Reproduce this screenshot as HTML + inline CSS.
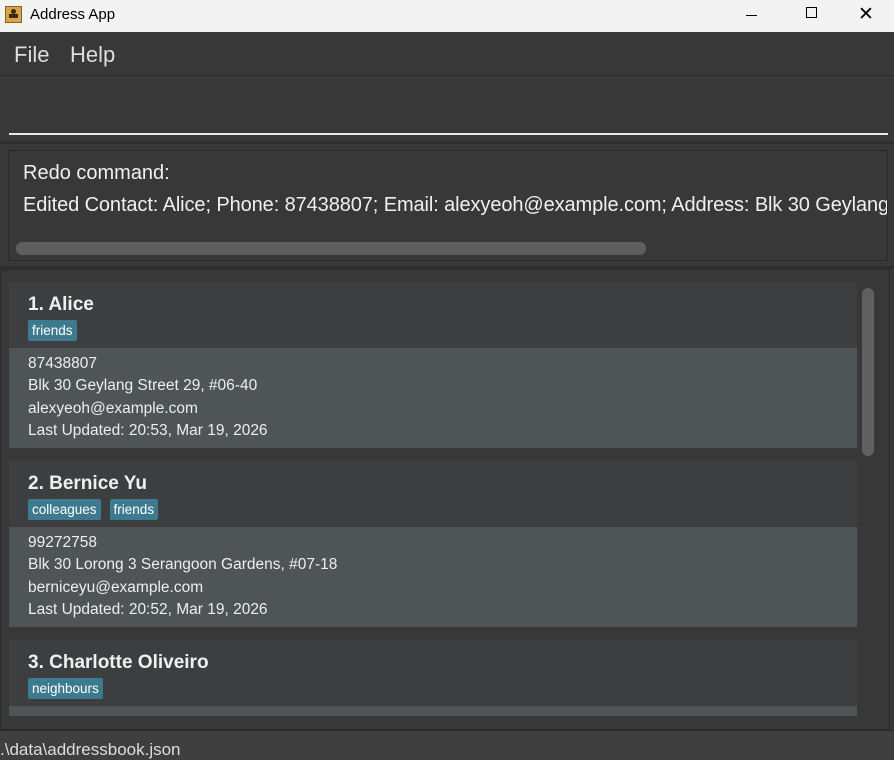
<!DOCTYPE html>
<html><head><style>
*{margin:0;padding:0;box-sizing:border-box}
body{width:894px;height:760px;overflow:hidden;background:#383838;font-family:"Liberation Sans",sans-serif;position:relative;color:#fff}
.abs{position:absolute}
.title{left:0;top:0;width:894px;height:32px;background:#f3f3f3;color:#000;font-size:15px}
.menu{top:32px;left:0;width:894px;height:44px;background:#383838;border-bottom:1px solid #2c2c2c;font-size:22px;color:#ddd}
.card{left:9px;width:848px}
.hd{background:#3c3e3f;padding:12px 19px 0}
.nm{font-size:19px;font-weight:bold;color:#f0f0f0;height:26px}
.tag{display:inline-block;background:#3d7a8f;color:#fff;font-size:13.5px;padding:1px 4px;border-radius:2px;margin-right:9px;height:21px;line-height:19px}
.dt{background:#4f5456;padding:5px 19px;font-size:15.5px;line-height:22.3px;color:#eee}
</style></head><body>
<div class="abs title">
<div class="abs" style="left:5px;top:6px;width:17px;height:17px;background:#d9a44c;border:1px solid #8a6220"></div>
<div class="abs" style="left:11px;top:9px;width:5px;height:5px;background:#3a2a10;border-radius:50%"></div>
<div class="abs" style="left:9px;top:14px;width:9px;height:4px;background:#3a2a10"></div>
<div class="abs" style="left:30px;top:6px">Address App</div>
<div class="abs" style="left:746px;top:15px;width:11px;height:1px;background:#000"></div>
<div class="abs" style="left:806px;top:7px;width:11px;height:11px;border:1px solid #000"></div>
<div class="abs" style="left:858px;top:3px;font-size:19px">✕</div>
</div>
<div class="abs menu"><span class="abs" style="left:14px;top:10px">File</span><span class="abs" style="left:70px;top:10px">Help</span></div>
<div class="abs" style="left:9px;top:133px;width:879px;height:2px;background:#e8e8e8"></div>
<div class="abs" style="left:0;top:141px;width:894px;height:3px;background:#2f2f2f"></div>
<div class="abs" style="left:8px;top:150px;width:880px;height:111px;border:1px solid #2a2a2a;overflow:hidden;font-size:20px;color:#f0f0f0;white-space:nowrap">
<div class="abs" style="left:14px;top:11px">Redo command:</div>
<div class="abs" style="left:14px;top:43px;letter-spacing:-0.1px">Edited Contact: Alice; Phone: 87438807; Email: alexyeoh@example.com; Address: Blk 30 Geylang Street 29</div>
<div class="abs" style="left:7px;top:91px;width:630px;height:13px;border-radius:6px;background:#5e5e5e"></div>
</div>
<div class="abs" style="left:0;top:266px;width:894px;height:3px;background:#2f2f2f"></div>
<div class="abs" style="left:0;top:269px;width:890px;height:461px;background:#383838;border:1px solid #2a2a2a;overflow:hidden">
<div class="abs" style="left:861px;top:18px;width:12px;height:168px;border-radius:6px;background:#606060"></div>
</div>
<div class="abs card" style="top:282px"><div class="hd" style="height:66px"><div class="nm">1. Alice</div><span class="tag">friends</span></div>
<div class="dt" style="height:100px">87438807<br>Blk 30 Geylang Street 29, #06-40<br>alexyeoh@example.com<br>Last Updated: 20:53, Mar 19, 2026</div></div>
<div class="abs card" style="top:461px"><div class="hd" style="height:66px"><div class="nm">2. Bernice Yu</div><span class="tag">colleagues</span><span class="tag">friends</span></div>
<div class="dt" style="height:100px">99272758<br>Blk 30 Lorong 3 Serangoon Gardens, #07-18<br>berniceyu@example.com<br>Last Updated: 20:52, Mar 19, 2026</div></div>
<div class="abs card" style="top:640px"><div class="hd" style="height:66px"><div class="nm">3. Charlotte Oliveiro</div><span class="tag">neighbours</span></div>
<div class="dt" style="height:10px"></div></div>
<div class="abs" style="left:0;top:730px;width:894px;height:30px;background:#3f3f3f;border-top:1px solid #2a2a2a;font-size:17px;color:#ddd;padding:9px 0 0 0;white-space:nowrap">.\data\addressbook.json</div>
</body></html>
